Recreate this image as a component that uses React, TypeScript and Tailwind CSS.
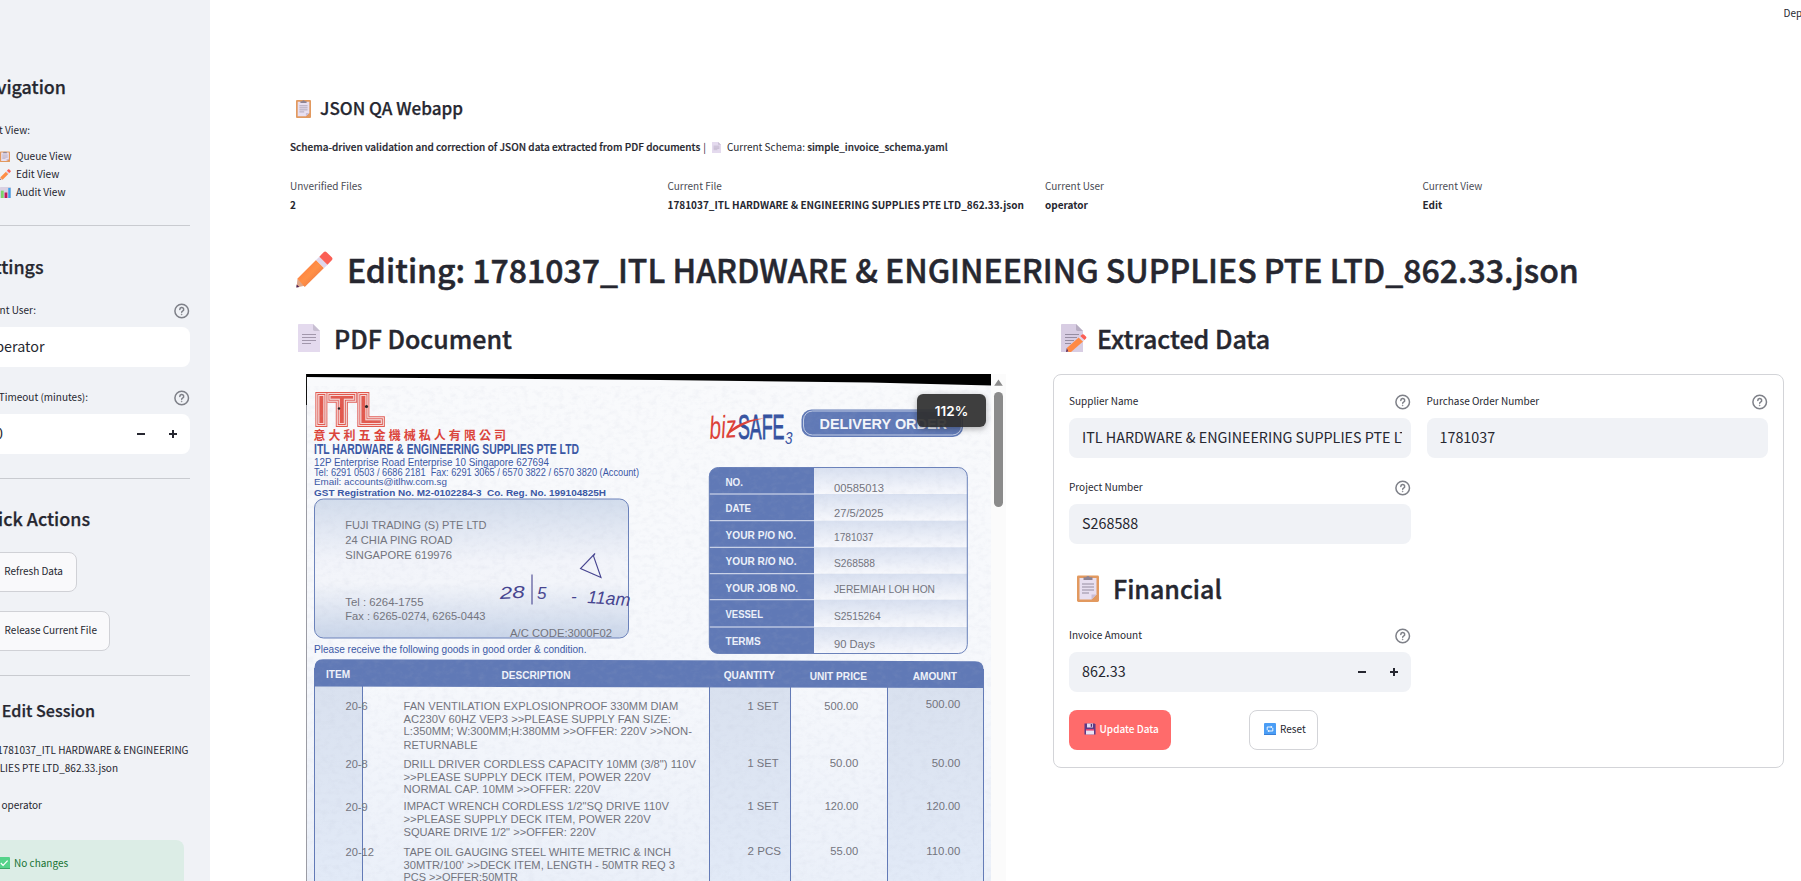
import React from "react";

/* ---------- icons ---------- */

function HelpIcon() {
  return (
    <svg className="size-4 shrink-0" viewBox="0 0 16 16" fill="none" stroke="#7e8088" strokeWidth="1.5">
      <circle cx="7.700" cy="8" r="6.800" />
      <path d="M5.800 6.400a1.950 1.950 0 1 1 2.800 1.750c-.6.3-.9.6-.9 1.200" strokeLinecap="round" />
      <circle cx="7.700" cy="11.400" r=".4" fill="#7e8088" strokeWidth=".8" />
    </svg>
  );
}

function Clipboard({ className }: { className: string }) {
  return (
    <svg className={className} viewBox="0 0 22 28" preserveAspectRatio="none">
      <rect x="0" y="1.5" width="22" height="26.5" rx="1.4" fill="#e2995f" />
      <path d="M2.5 4h17v16.5l-5 5h-12z" fill="#e8dff0" />
      <path d="M19.5 20.5l-5 5v-5z" fill="#c9bdd4" />
      <path d="M6.5 6V3.2h2.7a1.9 1.9 0 0 1 3.6 0h2.7V6z" fill="#8d8393" />
      <path d="M5 10h12M5 13h12M5 16h12M5 19h7" stroke="#968da0" strokeWidth="1" />
    </svg>
  );
}

function Pencil({ className }: { className: string }) {
  return (
    <svg className={className} viewBox="0 0 36 36">
      <defs>
        <linearGradient id="pencilBody" x1="0" y1="0" x2="1" y2="1">
          <stop offset="0" stopColor="#ff7038" />
          <stop offset=".5" stopColor="#ff9147" />
          <stop offset="1" stopColor="#e5683f" />
        </linearGradient>
      </defs>
      <path d="M.5 35.5L1.5 27l6.8 6.9z" fill="#dfa588" />
      <path d="M.3 35.6l.4-3 2.6 2.5z" fill="#4a2050" />
      <path d="M1.3 27L19.5 8.8l7.700 7.700L8.500 35z" fill="url(#pencilBody)" />
      <path d="M19.500 8.800l3.200-3.300 8 7.900-3.300 3.200z" fill="#dfd5ea" />
      <path d="M22.700 5.500l4.200-4.300q1.400-1.400 2.900 0l5 4.900q1.400 1.500 0 2.900l-4.200 4.300z" fill="#fb5f55" />
    </svg>
  );
}

function PageSheet({ className }: { className: string }) {
  return (
    <svg className={className} viewBox="0 0 22 28" preserveAspectRatio="none">
      <path d="M0 .8Q0 0 .8 0H15l7 7v21H0z" fill="#e4daee" />
      <path d="M15 0l7 7h-5.6Q15 7 15 5.6z" fill="#c8bfd2" />
      <path d="M4 10.5h14M4 13.5h14M4 16.5h14M4 19.5h9" stroke="#9a90a4" strokeWidth=".9" />
    </svg>
  );
}

function Memo({ className }: { className: string }) {
  return (
    <svg className={className} viewBox="0 0 26 28">
      <path d="M0 .8Q0 0 .8 0H15l7 7v21H0z" fill="#d8cde3" />
      <path d="M15 0l7 7h-5.6Q15 7 15 5.6z" fill="#b7adc2" />
      <path d="M4 10.5h14M4 13.5h12M4 16.5h9M4 19.5h6" stroke="#8f869b" strokeWidth=".9" />
      <path d="M5 28l.8-4 3.2 3z" fill="#5a2754" />
      <path d="M5.8 24L18 13.2l4.3 4L10 28H7.5z" fill="#ff8a45" />
      <path d="M17.5 13.6l1.8-1.6 4.2 4-1.7 1.6z" fill="#dfd5ea" />
      <path d="M19.3 12l1.8-1.4q1-.8 2 .1l2 2q.8.9-.1 1.8L23.5 16z" fill="#fb5f55" />
    </svg>
  );
}

function BarChart({ className }: { className: string }) {
  return (
    <svg className={className} viewBox="0 0 12 12">
      <rect width="12" height="12" rx=".6" fill="#d9d0e2" />
      <path d="M1 4h3v8H1z" fill="#7bd66a" />
      <path d="M5 6h3v6H5z" fill="#c2185b" />
      <path d="M9 1h2.6v11H9z" fill="#3f9fe8" />
    </svg>
  );
}

function CheckBox({ className }: { className: string }) {
  return (
    <svg className={className} viewBox="0 0 12 12">
      <rect width="12" height="12" rx="1" fill="#55d38a" />
      <path d="M0 11h12v1H0z" fill="#3aa868" />
      <path d="M2.8 6l2.3 2.3L9.6 3.6" fill="none" stroke="#fff" strokeWidth="1.2" />
    </svg>
  );
}

function Floppy({ className }: { className: string }) {
  return (
    <svg className={className} viewBox="0 0 12 12">
      <path d="M.5.5h10L11.5 1.5v10H.5z" fill="#5b3a86" />
      <path d="M3 .5h6v4H3z" fill="#e3dcf0" />
      <path d="M6.7 1h1.5v2.8H6.7z" fill="#4c3073" />
      <path d="M2 6.2h8v5.3H2z" fill="#e9e3f3" />
      <path d="M2 6.2h8v1.3H2z" fill="#e0265b" />
    </svg>
  );
}

function ResetGlyph({ className }: { className: string }) {
  return (
    <svg className={className} viewBox="0 0 12 12">
      <rect width="12" height="12" rx="1" fill="#4a9df5" />
      <path d="M0 11h12v1H0z" fill="#3a7fd6" />
      <path d="M3.200 7.200V4h4.300M8.800 4.800v3.200H4.500" fill="none" stroke="#fff" strokeWidth=".9" />
      <path d="M6.800 2.700l1.800 1.300-1.800 1.300zM5.200 6.700L3.400 8l1.800 1.300z" fill="#fff" />
    </svg>
  );
}

function Steppers() {
  return (
    <span className="flex shrink-0">
      <svg className="h-10 w-8" viewBox="0 0 32 40">
        <path d="M12 20h8" stroke="#262730" strokeWidth="2" />
      </svg>
      <svg className="h-10 w-8" viewBox="0 0 32 40">
        <path d="M12 20h8M16 16v8" stroke="#262730" strokeWidth="2" />
      </svg>
    </span>
  );
}

/* ---------- form pieces ---------- */

function Field({ label, value, stepper }: { label: string; value: string; stepper?: boolean }) {
  return (
    <div className="min-w-0">
      <div className="flex h-6 items-start justify-between">
        <label className="mt-0.5 text-[10px] leading-[17px] whitespace-nowrap">{label}</label>
        <span className="mt-1">
          <HelpIcon />
        </span>
      </div>
      <div className="mt-1 flex h-10 items-center justify-between rounded-lg bg-[#f0f2f6] pr-px pl-[13px]">
        <span className="mr-2 flex-1 overflow-hidden pb-0.5 text-[14.33px] leading-5 whitespace-nowrap">{value}</span>
        {stepper && <Steppers />}
      </div>
    </div>
  );
}

function SideField({ label, labelWidth, children }: { label: string; labelWidth: string; children: React.ReactNode }) {
  return (
    <div className="w-[190px]">
      <div className="flex h-6 items-start justify-between">
        <span className={`mt-0.5 flex justify-end text-[10px] leading-[17px] whitespace-nowrap ${labelWidth}`}>{label}</span>
        <span className="mt-1">
          <HelpIcon />
        </span>
      </div>
      <div className="mt-1 flex h-10 items-center justify-between rounded-r-lg bg-white pr-px">{children}</div>
    </div>
  );
}

function Sidebar() {
  return (
    <aside className="h-[881px] w-[210px] shrink-0 overflow-hidden bg-[#f0f2f6] pt-[74px]">
      <h2 className="flex w-[66px] justify-end text-[17.9px] leading-6 font-medium whitespace-nowrap [-webkit-text-stroke:0.25px]">Navigation</h2>
      <p className="mt-[22px] flex w-[30px] justify-end text-[10px] leading-5 whitespace-nowrap">Select View:</p>
      <ul className="mt-[7px] text-[10.1px] leading-[18px]">
        <li className="flex items-center gap-1.5">
          <Clipboard className="h-[11px] w-2.5" />
          Queue View
        </li>
        <li className="flex items-center gap-[5px]">
          <Pencil className="size-[11px]" />
          Edit View
        </li>
        <li className="flex items-center gap-[5px]">
          <BarChart className="size-[11px]" />
          Audit View
        </li>
      </ul>
      <hr className="mt-6 w-[190px] border-[#c9cbd0]" />
      <h2 className="mt-7 flex w-[43.500px] justify-end text-[17.9px] leading-6 font-medium [-webkit-text-stroke:0.25px]">Settings</h2>
      <div className="mt-[21px]">
        <SideField label="Current User:" labelWidth="w-9">
          <span className="flex w-[44.500px] justify-end pb-0.5 text-[14.33px]">operator</span>
        </SideField>
      </div>
      <div className="mt-[19px]">
        <SideField label="Lock Timeout (minutes):" labelWidth="w-[88px]">
          <span className="flex w-[3px] justify-end pb-0.5 text-[14.33px]">60</span>
          <Steppers />
        </SideField>
      </div>
      <hr className="mt-6 w-[190px] border-[#c9cbd0]" />
      <h2 className="mt-[27px] flex w-[90px] justify-end text-[17.9px] leading-6 font-medium whitespace-nowrap [-webkit-text-stroke:0.25px]">Quick Actions</h2>
      <button className="mt-[22px] -ml-4 flex h-10 w-[93px] items-center justify-end rounded-lg border border-[#d0d1d6] bg-[#f9f9fb] pr-[13px] pb-[3px] text-[10px] whitespace-nowrap">
        Refresh Data
      </button>
      <button className="mt-[19px] -ml-4 flex h-10 w-[126px] items-center justify-end rounded-lg border border-[#d0d1d6] bg-[#f9f9fb] pr-[12px] pb-[3px] text-[10px] whitespace-nowrap">
        Release Current File
      </button>
      <hr className="mt-6 w-[190px] border-[#c9cbd0]" />
      <h3 className="mt-[22px] flex w-[95px] justify-end text-[16.1px] leading-6 font-medium whitespace-nowrap [-webkit-text-stroke:0.25px]">Edit Session</h3>
      <p className="mt-[19px] flex w-[188.5px] justify-end text-[10px] leading-[18px] whitespace-nowrap">1781037_ITL HARDWARE &amp; ENGINEERING</p>
      <p className="flex w-[118px] justify-end text-[10px] leading-[18px] whitespace-nowrap">SUPPLIES PTE LTD_862.33.json</p>
      <p className="mt-[19px] flex w-[42px] justify-end text-[10px] leading-[18px] whitespace-nowrap">operator</p>
      <div className="mt-[26px] flex h-12 w-[184px] items-center gap-1 rounded-tr-lg bg-[#dcede6] pb-[3px] text-[10px] text-[#177233]">
        <CheckBox className="mt-px -ml-0.5 size-3" />
        No changes
      </div>
    </aside>
  );
}

/* ---------- scanned delivery order ---------- */

type TProps = {
  x: number;
  y: number;
  to?: number;
  s?: number;
  b?: boolean;
  fill?: string;
  children: string;
};

function T({ x, y, to, s = 11, b, fill = "#72737c", children }: TProps) {
  return (
    <text
      x={x}
      y={y}
      fontSize={s}
      fontWeight={b ? 700 : 400}
      fill={fill}
      textLength={to ? to - x : undefined}
      lengthAdjust="spacingAndGlyphs"
    >
      {children}
    </text>
  );
}

const BLUE = "#3856a4";
const BAND = "#6079b6";

const infoRows = [
  { top: 467, label: "NO.", ly: 485.5, le: 743, value: "00585013", vy: 492.3, ve: 884 },
  { top: 494, label: "DATE", ly: 512, le: 751, value: "27/5/2025", vy: 516.7, ve: 883.5 },
  { top: 520.7, label: "YOUR P/O NO.", ly: 538.7, le: 796, value: "1781037", vy: 541, ve: 873.5 },
  { top: 547.3, label: "YOUR R/O NO.", ly: 565.3, le: 796.5, value: "S268588", vy: 567, ve: 875 },
  { top: 573.7, label: "YOUR JOB NO.", ly: 591.7, le: 798, value: "JEREMIAH LOH HON", vy: 593.3, ve: 935 },
  { top: 599.7, label: "VESSEL", ly: 618, le: 763, value: "S2515264", vy: 619.5, ve: 880.7 },
  { top: 627, label: "TERMS", ly: 645, le: 760.7, value: "90 Days", vy: 647.7, ve: 875 },
];

const items = [
  {
    no: "20-6", ne: 367.7, y: 710.3, qty: "1 SET", qe: 778.5, price: "500.00", px: 824.3, amount: "500.00", ax: 925.7, ay: 708.5,
    lines: [
      ["FAN VENTILATION EXPLOSIONPROOF 330MM DIAM", 710.3, 678.3],
      ["AC230V 60HZ VEP3 >>PLEASE SUPPLY FAN SIZE:", 722.7, 671],
      ["L:350MM; W:300MM;H:380MM >>OFFER: 220V >>NON-", 735.3, 692],
      ["RETURNABLE", 749, 477.7],
    ],
  },
  {
    no: "20-8", ne: 367.7, y: 767.5, qty: "1 SET", qe: 778.5, price: "50.00", px: 829.7, amount: "50.00", ax: 931.7, ay: 767.5,
    lines: [
      ["DRILL DRIVER CORDLESS CAPACITY 10MM (3/8\") 110V", 767.5, 696],
      [">>PLEASE SUPPLY DECK ITEM, POWER 220V", 780.5, 650.7],
      ["NORMAL CAP. 10MM >>OFFER: 220V", 793, 600.7],
    ],
  },
  {
    no: "20-9", ne: 367.7, y: 810.5, qty: "1 SET", qe: 778.5, price: "120.00", px: 824.7, amount: "120.00", ax: 926.3, ay: 810.7,
    lines: [
      ["IMPACT WRENCH CORDLESS 1/2\"SQ DRIVE 110V", 810.3, 669],
      [">>PLEASE SUPPLY DECK ITEM, POWER 220V", 823.3, 650.7],
      ["SQUARE DRIVE 1/2\" >>OFFER: 220V", 836.3, 596],
    ],
  },
  {
    no: "20-12", ne: 374, y: 855.5, qty: "2 PCS", qe: 781, price: "55.00", px: 830.3, amount: "110.00", ax: 926.3, ay: 855.7,
    lines: [
      ["TAPE OIL GAUGING STEEL WHITE METRIC & INCH", 855.5, 671],
      ["30MTR/100' >>DECK ITEM, LENGTH - 50MTR REQ 3", 868.5, 675],
      ["PCS >>OFFER:50MTR", 881, 518],
    ],
  },
] as const;

function ScannedPage() {
  return (
    <svg
      className="h-[507px] w-[685px] shrink-0 font-['Liberation_Sans',Arial,sans-serif]"
      viewBox="306 374 685 507"
    >
      <defs>
        <linearGradient id="paper" x1="0" y1="0" x2="0" y2="1">
          <stop offset="0" stopColor="#f9fafc" />
          <stop offset=".6" stopColor="#f6f8fc" />
          <stop offset="1" stopColor="#ebf0f9" />
        </linearGradient>
        <linearGradient id="address" x1="0" y1="0" x2="0" y2="1">
          <stop offset="0" stopColor="#d2dcec" />
          <stop offset=".45" stopColor="#f2f4fa" />
          <stop offset=".6" stopColor="#f3f5fa" />
          <stop offset="1" stopColor="#c9d5e9" />
        </linearGradient>
        <linearGradient id="cell" x1="0" y1="0" x2="0" y2="1">
          <stop offset="0" stopColor="#d8e0f0" />
          <stop offset="1" stopColor="#f8f9fd" />
        </linearGradient>
        <linearGradient id="tint" x1="0" y1="0" x2="0" y2="1">
          <stop offset="0" stopColor="#d9e1ef" />
          <stop offset="1" stopColor="#e2eaf7" />
        </linearGradient>
        <filter id="grain" x="0" y="0" width="1" height="1">
          <feTurbulence type="fractalNoise" baseFrequency=".14 .2" numOctaves="4" seed="4" />
          <feColorMatrix values="0 0 0 0 .45  0 0 0 0 .48  0 0 0 0 .6  .7 0 0 0 -.3" />
        </filter>
        <filter id="contours" x="-.2" y="-.2" width="1.4" height="1.4">
          <feMorphology in="SourceGraphic" operator="dilate" radius="3" result="d3" />
          <feMorphology in="SourceGraphic" operator="dilate" radius="2" result="d2" />
          <feMorphology in="SourceGraphic" operator="dilate" radius="1" result="d1" />
          <feMorphology in="SourceGraphic" operator="erode" radius="1" result="e1" />
          <feFlood floodColor="#f8d9d7" result="pink" />
          <feComposite in="pink" in2="d3" operator="in" result="base" />
          <feComposite in="d3" in2="d2" operator="out" result="outer" />
          <feComposite in="d1" in2="SourceGraphic" operator="out" result="middle" />
          <feMerge>
            <feMergeNode in="base" />
            <feMergeNode in="outer" />
            <feMergeNode in="middle" />
            <feMergeNode in="e1" />
          </feMerge>
        </filter>
        <clipPath id="infoClip">
          <rect x="709" y="467.5" width="258.5" height="186" rx="9" />
        </clipPath>
      </defs>

      <rect x="306" y="374" width="685" height="507" fill="url(#paper)" />
      <path d="M306 374H991V385.5L870 382.5 660 380 480 378.5 306 377z" fill="#000" />
      <path d="M306.5 374V405" stroke="#111" />
      <path d="M306.5 405V881" stroke="#9b9ca4" />

      {/* company mark */}
      <text
        x="315.5 329 357.5"
        y="423.5"
        fontWeight="700"
        fontSize="42"
        fill="#e2594e"
        filter="url(#contours)"
      >
        ITL
      </text>
      <circle cx="339" cy="408.5" r="1.2" fill="#222" />
      <circle cx="366.5" cy="406.5" r="1.6" fill="#222" />
      <g className="font-['Noto_Sans_CJK_TC',sans-serif]">
        <text x="313.5" y="440" fontSize="12" fontWeight="700" fill="#dc4238" textLength="192.5">意大利五金機械私人有限公司</text>
      </g>
      <T x={314} y={453.7} to={579} s={14.5} b fill={BLUE}>ITL HARDWARE &amp; ENGINEERING SUPPLIES PTE LTD</T>
      <T x={314} y={465.7} to={549} s={10} fill={BLUE}>12P Enterprise Road Enterprise 10 Singapore 627694</T>
      <T x={314} y={475.7} to={639} s={10} fill={BLUE}>{"Tel: 6291 0503 / 6686 2181\u00a0 Fax: 6291 3065 / 6570 3822 / 6570 3820 (Account)"}</T>
      <T x={314} y={485.3} to={447} s={9.8} fill={BLUE}>Email: accounts@itlhw.com.sg</T>
      <T x={314} y={496.3} to={606} s={9.8} b fill={BLUE}>{"GST Registration No. M2-0102284-3\u00a0 Co. Reg. No. 199104825H"}</T>

      {/* addressee */}
      <rect x="314.5" y="499" width="314" height="139" rx="9" fill="url(#address)" stroke="#6a81ba" />
      <T x={345.3} y={528.5} to={486.5}>FUJI TRADING (S) PTE LTD</T>
      <T x={345.3} y={544} to={452.5}>24 CHIA PING ROAD</T>
      <T x={345.3} y={559.2} to={452}>SINGAPORE 619976</T>
      <T x={345.3} y={606} to={423.5}>Tel : 6264-1755</T>
      <T x={345.3} y={619.5} to={485.5}>Fax : 6265-0274, 6265-0443</T>
      <T x={510} y={636.5} to={612} s={10.5}>A/C CODE:3000F02</T>
      <T x={314} y={652.5} to={586.5} s={10.5} fill={BLUE}>Please receive the following goods in good order &amp; condition.</T>

      {/* pen marks */}
      <g fill="#45438f" className="font-['Liberation_Sans',sans-serif] italic">
        <text x="500" y="599" fontSize="17" textLength="25" lengthAdjust="spacingAndGlyphs" transform="rotate(-3 500 599)">28</text>
        <text x="537" y="598.5" fontSize="17">5</text>
        <text x="571" y="602" fontSize="17">-</text>
        <text x="587" y="603" fontSize="18" textLength="43" lengthAdjust="spacingAndGlyphs" transform="rotate(4 587 603)">11am</text>
      </g>
      <path d="M532 574.5V604.5M595 553.5L580.5 568.5 601 577.5 593.5 556z" fill="none" stroke="#45438f" strokeWidth="1.1" />

      {/* certification mark */}
      <g className="font-['Liberation_Sans',sans-serif]">
        <text transform="rotate(-4 710 438)" x="710" y="439" fontSize="32" fontStyle="italic" fill="#dd3f36" textLength="27" lengthAdjust="spacingAndGlyphs">biz</text>
        <text x="738" y="438.5" fontSize="35" fill="#33509f" stroke="#33509f" strokeWidth=".9" textLength="46.5" lengthAdjust="spacingAndGlyphs">SAFE</text>
        <text x="785" y="443.5" fontSize="16" fontStyle="italic" fill="#33509f" textLength="7.5" lengthAdjust="spacingAndGlyphs">3</text>
      </g>
      <path d="M729 431C738 424 748 418.5 764 418.5 750 421 742 425 730 433z" fill="#dd3f36" />

      {/* document type */}
      <rect x="801.5" y="409.5" width="161.5" height="27.5" rx="10" fill={BAND} />
      <rect x="803.5" y="411" width="158" height="24" rx="9" fill="none" stroke="#d8dff0" strokeWidth=".8" />
      <T x={819.5} y={428.7} to={947} s={14.5} b fill="#f4f6fb">DELIVERY ORDER</T>

      {/* order details */}
      <g clipPath="url(#infoClip)">
        {infoRows.map((r) => (
          <g key={r.label}>
            <rect x="709" y={r.top} width="105" height="27.5" fill={BAND} />
            <rect x="814" y={r.top} width="154" height="27.5" fill="url(#cell)" />
            <path d={`M709 ${r.top}H814`} stroke="#e3e8f4" strokeWidth="1" />
          </g>
        ))}
      </g>
      <rect x="709.3" y="467.5" width="258" height="186" rx="9" fill="none" stroke="#6a81ba" />
      {infoRows.map((r) => (
        <g key={r.value}>
          <T x={725.5} y={r.ly} to={r.le} s={10.3} b fill="#edf1fa">{r.label}</T>
          <T x={834} y={r.vy} to={r.ve} s={10.7}>{r.value}</T>
        </g>
      ))}

      {/* goods table */}
      <path d="M314.5 686H362.5V881H314.5zM709.5 687H790.5V881H709.5zM887.5 687H983.5V881H887.5z" fill="url(#tint)" />
      <path d="M314.5 686.5V668Q314.5 659.3 323 659.3L975 661.2Q983.5 661.2 983.5 669.5V688z" fill={BAND} />
      <path d="M314.5 668V881M362.5 660V881M709.5 661V881M790.5 661V881M887.5 661V881M983.5 669V881" stroke="#6179b6" fill="none" />
      <T x={326} y={677.7} to={350} s={10} b fill="#f0f3fa">ITEM</T>
      <T x={501.5} y={678.5} to={570.5} s={10} b fill="#f0f3fa">DESCRIPTION</T>
      <T x={723.7} y={679.3} to={775} s={10} b fill="#f0f3fa">QUANTITY</T>
      <T x={809.7} y={679.5} to={867} s={10} b fill="#f0f3fa">UNIT PRICE</T>
      <T x={912.7} y={679.7} to={957} s={10} b fill="#f0f3fa">AMOUNT</T>
      {items.map((it) => (
        <g key={it.no}>
          <T x={345.5} y={it.y} to={it.ne}>{it.no}</T>
          {it.lines.map(([text, y, to]) => (
            <T key={y} x={403.5} y={y} to={to}>{text}</T>
          ))}
          <T x={747.5} y={it.y - 0.5} to={it.qe}>{it.qty}</T>
          <T x={it.px} y={it.y - 0.7} to={858.3}>{it.price}</T>
          <T x={it.ax} y={it.ay - 0.3} to={960.3}>{it.amount}</T>
        </g>
      ))}

      <rect x="307" y="386" width="684" height="495" filter="url(#grain)" opacity=".35" />
    </svg>
  );
}

function PdfViewer() {
  return (
    <div className="relative ml-4 flex h-[507px] w-[700px] overflow-hidden">
      <ScannedPage />
      <div className="flex w-[15px] flex-col items-center bg-[#fbfbfb]">
        <svg className="mt-[5px] h-[7px] w-[9px]" viewBox="0 0 9 7">
          <path d="M4.5.4L8.8 6.7H.2z" fill="#8b8b8b" />
        </svg>
        <div className="mt-1.5 h-[115px] w-[9px] rounded-full bg-[#8b8b8b]" />
      </div>
      <div className="absolute top-5 left-[611px] flex h-[33px] w-[69px] items-center justify-center rounded-md bg-[#2f2f2f]/93 pt-px font-['Inter',sans-serif] text-[13.5px] font-semibold text-white shadow-[0_2px_6px_rgba(0,0,0,0.3)]">
        112%
      </div>
    </div>
  );
}

/* ---------- page ---------- */

const metrics = [
  ["Unverified Files", "2"],
  ["Current File", "1781037_ITL HARDWARE & ENGINEERING SUPPLIES PTE LTD_862.33.json"],
  ["Current User", "operator"],
  ["Current View", "Edit"],
];

export default function App() {
  return (
    <div className="flex h-[881px] w-[1801px] overflow-hidden bg-white font-['Noto_Sans_CJK_SC',sans-serif] text-[#262730]">
      <Sidebar />
      <main className="min-w-0 flex-1 overflow-hidden pl-20">
        <div className="flex h-24 justify-end pt-[3px]">
          <span className="w-[17.5px] text-[10px] leading-5 whitespace-nowrap">Deploy</span>
        </div>

        <h4 className="flex h-6 items-center pl-1.5 text-[17.1px] leading-6 font-medium [-webkit-text-stroke:0.25px]">
          <Clipboard className="mr-[9px] h-[19px] w-[15px]" />
          JSON QA Webapp
        </h4>
        <p className="mt-[17px] flex items-center text-[10px] leading-5 whitespace-nowrap">
          <b className="font-medium tracking-[0.022px] [-webkit-text-stroke:0.2px]">
            Schema-driven validation and correction of JSON data extracted from PDF documents
          </b>
          <span className="mx-[3px]">|</span>
          <PageSheet className="mr-1.5 ml-[3px] h-[11px] w-[9px]" />
          Current Schema:&nbsp;
          <b className="font-medium [-webkit-text-stroke:0.2px]">simple_invoice_schema.yaml</b>
        </p>

        <div className="mt-[19px] grid grid-cols-[repeat(4,377.5px)] text-[10px] leading-[19px]">
          {metrics.map(([name, value]) => (
            <div key={name} className="whitespace-nowrap">
              <div className="text-[#4a4b54]">{name}</div>
              <div className="font-bold">{value}</div>
            </div>
          ))}
        </div>

        <h1 className="mt-[33px] flex h-11 items-center pl-1.5 text-[32px] leading-[44px] font-medium whitespace-nowrap [-webkit-text-stroke:0.5px]">
          <Pencil className="mr-[14px] size-[37px] shrink-0" />
          Editing: 1781037_ITL HARDWARE &amp; ENGINEERING SUPPLIES PTE LTD_862.33.json
        </h1>

        <div className="mt-[29px] flex">
          <section className="w-[763px] shrink-0">
            <h2 className="mb-[18px] flex h-9 items-center pl-2 text-[25px] leading-9 font-medium [-webkit-text-stroke:0.4px]">
              <PageSheet className="mr-3.5 h-7 w-[22px]" />
              PDF Document
            </h2>
            <PdfViewer />
          </section>

          <section className="w-[731px] shrink-0">
            <h2 className="mb-[18px] flex h-9 items-center pl-2 text-[25px] leading-9 font-medium [-webkit-text-stroke:0.4px]">
              <Memo className="mr-2.5 h-7 w-[26px]" />
              Extracted Data
            </h2>
            <form className="rounded-lg border border-[#d3d4d8] px-[15px] pt-[15px] pb-[17px]">
              <div className="grid grid-cols-[342px_341px] gap-x-[15.5px] gap-y-[18px]">
                <Field label="Supplier Name" value="ITL HARDWARE & ENGINEERING SUPPLIES PTE LTD" />
                <Field label="Purchase Order Number" value="1781037" />
                <Field label="Project Number" value="S268588" />
              </div>
              <h2 className="mt-[26px] mb-[18px] flex h-9 items-center pl-2 text-[25px] leading-9 font-medium [-webkit-text-stroke:0.4px]">
                <Clipboard className="mr-3.5 h-7 w-[22px]" />
                Financial
              </h2>
              <div className="w-[342px]">
                <Field label="Invoice Amount" value="862.33" stepper />
              </div>
              <div className="mt-[18px] flex">
                <div className="w-[180px]">
                  <button type="button" className="flex h-10 w-[102px] items-center gap-1 rounded-lg bg-[#ff6b6b] pb-[3px] pl-[14.5px] text-[10px] font-medium whitespace-nowrap text-white">
                    <Floppy className="mt-px size-3" />
                    Update Data
                  </button>
                </div>
                <button type="button" className="flex h-10 w-[69px] items-center gap-1 rounded-lg border border-[#d3d4d8] pb-[3px] pl-3.5 text-[10px]">
                  <ResetGlyph className="mt-px size-3" />
                  Reset
                </button>
              </div>
            </form>
          </section>
        </div>
      </main>
    </div>
  );
}
